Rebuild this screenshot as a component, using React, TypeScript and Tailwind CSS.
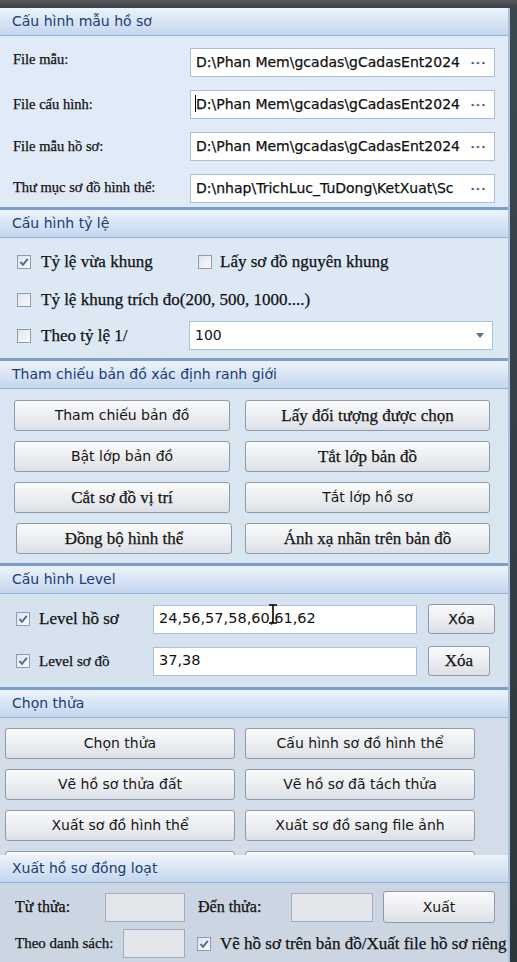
const sans = "font-['DejaVu_Sans','Noto_Sans',sans-serif]";
const serif = "font-['Liberation_Serif','DejaVu_Serif',serif] [-webkit-text-stroke:0.25px_#111]";

function Header({ title, first = false }: { title: string; first?: boolean }) {
  return (
    <div
      className={`${first ? 'h-[28px]' : 'h-[31px] border-t-[3px] border-t-[#7d9dca]'} flex shrink-0 items-center border-b border-b-[#93b2da] bg-gradient-to-b from-[#edf3fb] to-[#c3d6ee] pl-[12px] text-[14px] text-[#1d3b74] ${sans}`}
    >
      {title}
    </div>
  );
}

function Check({ checked = false }: { checked?: boolean }) {
  return (
    <span className="flex h-[14px] w-[14px] shrink-0 items-center justify-center border border-[#8e9cb0] bg-gradient-to-br from-[#dfe3ea] to-[#fbfcfd]">
      {checked && (
        <svg width="10" height="10" viewBox="0 0 10 10">
          <path d="M1.5 5 L4 7.8 L8.8 1.8" stroke="#4f6c9e" strokeWidth="2" fill="none" />
        </svg>
      )}
    </span>
  );
}

function PathBox({ value, cursor = false }: { value: string; cursor?: boolean }) {
  return (
    <div className="ml-auto flex h-[29px] w-[305px] items-center border border-[#aac0da] bg-white">
      <div className={`relative w-[272px] shrink-0 overflow-hidden whitespace-nowrap pl-[5px] text-[14px] text-[#111] ${sans}`}>
        {cursor && <span className="absolute left-[4px] top-[1px] h-[17px] w-px bg-black" />}
        {value}
      </div>
      <span className="flex-1 text-center text-[13px] font-bold leading-none tracking-[1px] text-[#3a6cb5]">···</span>
    </div>
  );
}

function Btn({ label, w, f = sans, h = 'h-[31px]', size = 'text-[14px]' }: { label: string; w: string; f?: string; h?: string; size?: string }) {
  return (
    <div
      className={`${w} ${h} ${f} ${size} flex shrink-0 items-center justify-center rounded-[3px] border border-[#8d9aac] bg-gradient-to-b from-[#fbfbfc] via-[#eceef1] to-[#dce0e6] text-[#161616]`}
    >
      {label}
    </div>
  );
}

const sb = 'text-[17px]';

export default function App() {
  return (
    <div className="flex h-[962px] w-[517px] flex-col overflow-hidden bg-[#2f3a42]">
      <div className="h-[8px] shrink-0 bg-gradient-to-b from-[#55585c] to-[#3d4146]" />
      <div className="flex flex-1">
        <div className="flex w-[510px] flex-col border-r-2 border-[#a9c0dc]">
          <Header title="Cấu hình mẫu hồ sơ" first />
          <div className={`flex h-[171px] shrink-0 flex-col gap-[13px] bg-[#e1ebf7] pl-[13px] pr-[13px] pt-[12px] text-[14.5px] text-[#111] ${serif}`}>
            <div className="flex items-center">
              <span className="-mt-[6px]">File mẫu:</span>
              <PathBox value="D:\Phan Mem\gcadas\gCadasEnt2024" />
            </div>
            <div className="flex items-center">
              <span>File cấu hình:</span>
              <PathBox value="D:\Phan Mem\gcadas\gCadasEnt2024" cursor />
            </div>
            <div className="flex items-center">
              <span>File mẫu hồ sơ:</span>
              <PathBox value="D:\Phan Mem\gcadas\gCadasEnt2024" />
            </div>
            <div className="flex h-[28px] items-center">
              <span className="whitespace-nowrap">Thư mục sơ đồ hình thể:</span>
              <PathBox value="D:\nhap\TrichLuc_TuDong\KetXuat\Sc" />
            </div>
          </div>

          <Header title="Cấu hình tỷ lệ" />
          <div className={`flex h-[120px] shrink-0 flex-col bg-[#dde8f5] pl-[17px] pr-[15px] pt-[17px] text-[17px] text-[#111] ${serif}`}>
            <div className="flex h-[14px] items-center">
              <Check checked />
              <span className="ml-[10px] w-[157px]">Tỷ lệ vừa khung</span>
              <Check />
              <span className="ml-[8px]">Lấy sơ đồ nguyên khung</span>
            </div>
            <div className="mt-[24px] flex h-[14px] items-center">
              <Check />
              <span className="ml-[10px]">Tỷ lệ khung trích đo(200, 500, 1000....)</span>
            </div>
            <div className="mt-[14px] flex items-center">
              <Check />
              <span className="ml-[10px]">Theo tỷ lệ 1/</span>
              <div className={`ml-auto flex h-[29px] w-[304px] items-center justify-between border border-[#aac0da] bg-white pl-[5px] pr-[8px] text-[14px] [-webkit-text-stroke:0] ${sans}`}>
                <span>100</span>
                <svg width="8" height="5" viewBox="0 0 8 5">
                  <path d="M0 0 H8 L4 5 Z" fill="#5c6f8a" />
                </svg>
              </div>
            </div>
          </div>

          <Header title="Tham chiếu bản đồ xác định ranh giới" />
          <div className="flex h-[174px] shrink-0 flex-col gap-[10px] bg-[#dae5f2] pl-[14px] pt-[11px]">
            <div className="flex gap-[15px]">
              <Btn label="Tham chiếu bản đồ" w="w-[216px]" />
              <Btn label="Lấy đối tượng được chọn" w="w-[245px]" f={serif} size={sb} />
            </div>
            <div className="flex gap-[15px]">
              <Btn label="Bật lớp bản đồ" w="w-[216px]" />
              <Btn label="Tắt lớp bản đồ" w="w-[245px]" f={serif} size={sb} />
            </div>
            <div className="flex gap-[15px]">
              <Btn label="Cắt sơ đồ vị trí" w="w-[216px]" f={serif} size={sb} />
              <Btn label="Tắt lớp hồ sơ" w="w-[245px]" />
            </div>
            <div className="flex gap-[13px] pl-[2px]">
              <Btn label="Đồng bộ hình thể" w="w-[216px]" f={serif} size={sb} />
              <Btn label="Ánh xạ nhãn trên bản đồ" w="w-[245px]" f={serif} size={sb} />
            </div>
          </div>

          <Header title="Cấu hình Level" />
          <div className={`flex h-[93px] shrink-0 flex-col bg-[#d7e2ef] pl-[16px] pt-[10px] text-[17px] text-[#111] ${serif}`}>
            <div className="flex items-center">
              <Check checked />
              <span className="ml-[9px] w-[114px]">Level hồ sơ</span>
              <div className={`relative flex h-[29px] w-[264px] items-center border border-[#aac0da] bg-white pl-[5px] text-[14.5px] [-webkit-text-stroke:0] ${sans}`}>
                24,56,57,58,60,61,62
                <svg className="absolute left-[114px] top-[-2px]" width="10" height="20" viewBox="0 0 10 20">
                  <path d="M1 1 H9 M5 1 V19 M1 19 H9" stroke="#000" strokeWidth="1.6" fill="none" />
                </svg>
              </div>
              <Btn label="Xóa" w="ml-[11px] w-[67px]" h="h-[30px]" />
            </div>
            <div className="mt-[12px] flex items-center">
              <Check checked />
              <span className="ml-[9px] w-[114px] text-[15px]">Level sơ đồ</span>
              <div className={`flex h-[29px] w-[264px] items-center border border-[#aac0da] bg-white pl-[5px] text-[14.5px] [-webkit-text-stroke:0] ${sans}`}>
                37,38
              </div>
              <Btn label="Xóa" w="ml-[11px] w-[62px]" h="h-[30px]" f={serif} size={sb} />
            </div>
          </div>

          <Header title="Chọn thửa" />
          <div className="flex h-[137px] shrink-0 flex-col gap-[10px] overflow-hidden bg-[#d3dde9] pl-[5px] pt-[10px]">
            <div className="flex gap-[10px]">
              <Btn label="Chọn thửa" w="w-[230px]" />
              <Btn label="Cấu hình sơ đồ hình thể" w="w-[230px]" />
            </div>
            <div className="flex gap-[10px]">
              <Btn label="Vẽ hồ sơ thửa đất" w="w-[230px]" />
              <Btn label="Vẽ hồ sơ đã tách thửa" w="w-[230px]" />
            </div>
            <div className="flex gap-[10px]">
              <Btn label="Xuất sơ đồ hình thể" w="w-[230px]" />
              <Btn label="Xuất sơ đồ sang file ảnh" w="w-[230px]" />
            </div>
            <div className="flex gap-[10px]">
              <Btn label="" w="w-[230px]" />
              <Btn label="" w="w-[230px]" />
            </div>
          </div>

          <Header title="Xuất hồ sơ đồng loạt" first />
          <div className={`flex flex-1 flex-col bg-[#ccd6e2] pl-[15px] pt-[8px] text-[16px] text-[#111] ${serif}`}>
            <div className="flex items-center">
              <span className="w-[90px]">Từ thửa:</span>
              <div className="h-[29px] w-[80px] border border-[#9eacbd] bg-[#e2e5e9]" />
              <span className="ml-[13px] w-[93px]">Đến thửa:</span>
              <div className="h-[29px] w-[82px] border border-[#9eacbd] bg-[#e2e5e9]" />
              <Btn label="Xuất" w="ml-[10px] w-[112px] [-webkit-text-stroke:0]" h="h-[32px]" />
            </div>
            <div className="mt-[6px] flex items-center">
              <span className="w-[108px] whitespace-nowrap text-[15px]">Theo danh sách:</span>
              <div className="h-[29px] w-[62px] border border-[#9eacbd] bg-[#e2e5e9]" />
              <span className="ml-[12px]">
                <Check checked />
              </span>
              <span className="ml-[9px] whitespace-nowrap text-[17px]">Vẽ hồ sơ trên bản đồ/Xuất file hồ sơ riêng</span>
            </div>
          </div>
        </div>
        <div className="flex-1 bg-gradient-to-b from-[#3a4850] to-[#2c363d]" />
      </div>
    </div>
  );
}
